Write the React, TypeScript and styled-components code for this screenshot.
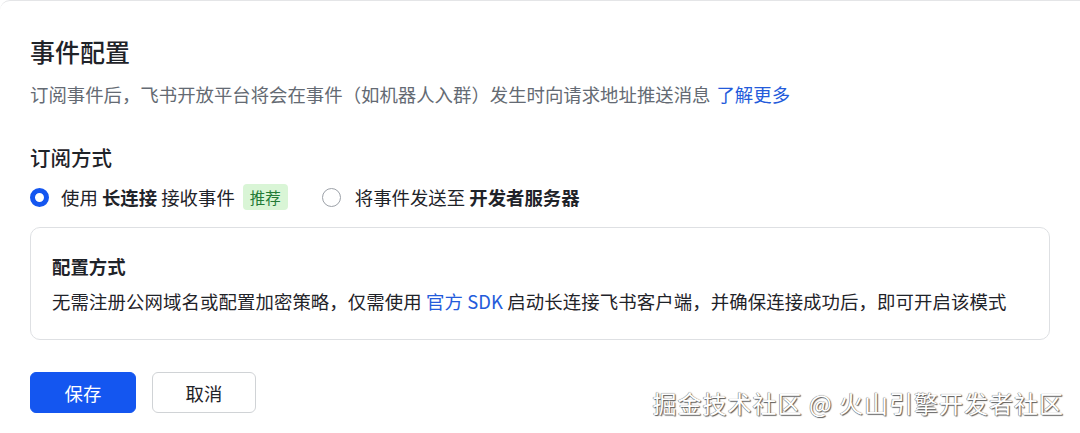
import React from "react";
import styled, { createGlobalStyle } from "styled-components";

const GlobalStyle = createGlobalStyle`
  html, body {
    margin: 0;
    padding: 0;
    background: #ffffff;
  }
  body {
    font-family: "Noto Sans CJK SC", "Noto Sans", sans-serif;
    -webkit-font-smoothing: antialiased;
  }
`;

const Page = styled.div`
  position: relative;
  width: 1080px;
  height: 433px;
  box-sizing: border-box;
  border-top: 1px solid #e4e5e7;
  border-top-left-radius: 10px;
  padding: 0 30px;
  background: #fff;
  overflow: hidden;
`;

const Title = styled.h1`
  margin: 32px 0 0;
  font-size: 25px;
  line-height: 36px;
  font-weight: 500;
  color: #1f2329;
`;

const Description = styled.p`
  margin: 12px 0 0;
  font-size: 18.4px;
  line-height: 26px;
  color: #646a73;
`;

const Link = styled.a`
  color: #245bdb;
  text-decoration: none;
  margin-left: 6px;
`;

const SectionTitle = styled.h2`
  margin: 36px 0 0;
  font-size: 20.5px;
  line-height: 28px;
  font-weight: 500;
  color: #1f2329;
`;

const RadioGroup = styled.div`
  margin-top: 12px;
  display: flex;
  align-items: center;
  gap: 34px;
  height: 28px;
`;

const RadioOption = styled.label`
  display: flex;
  align-items: center;
  font-size: 18.4px;
  line-height: 26px;
  color: #1f2329;
  white-space: pre;
`;

const RadioCircle = styled.span<{ $checked?: boolean }>`
  box-sizing: border-box;
  width: 19px;
  height: 19px;
  border-radius: 50%;
  margin-right: ${(p) => (p.$checked ? "12px" : "14px")};
  border: ${(p) => (p.$checked ? "5.5px solid #1456f0" : "1.2px solid #9ca1a8")};
  background: #fff;
  flex: none;
`;

const Strong = styled.b`
  font-weight: 600;
`;

const Tag = styled.span`
  margin-left: 8px;
  display: inline-flex;
  align-items: center;
  height: 26px;
  padding: 0 7px;
  border-radius: 4px;
  background: #d9f5d6;
  color: #237b36;
  font-size: 15.5px;
`;

const Card = styled.div`
  margin-top: 16px;
  box-sizing: border-box;
  height: 113px;
  border: 1px solid #dee0e3;
  border-radius: 10px;
  padding: 25px 21px 24px;
`;

const CardTitle = styled.div`
  font-size: 18.4px;
  line-height: 26px;
  font-weight: 600;
  color: #1f2329;
`;

const CardText = styled.div`
  margin-top: 9px;
  font-size: 18.4px;
  line-height: 26px;
  letter-spacing: 0.1px;
  color: #1f2329;
`;

const InlineLink = styled.a`
  color: #245bdb;
  text-decoration: none;
`;

const Actions = styled.div`
  margin-top: 32px;
  display: flex;
  gap: 16px;
`;

const Button = styled.button<{ $primary?: boolean; $width: number }>`
  box-sizing: border-box;
  width: ${(p) => p.$width}px;
  height: 41px;
  border-radius: 6px;
  font-family: inherit;
  font-size: 18.4px;
  cursor: pointer;
  border: 1px solid ${(p) => (p.$primary ? "#1456f0" : "#d0d3d6")};
  background: ${(p) => (p.$primary ? "#1456f0" : "#ffffff")};
  color: ${(p) => (p.$primary ? "#ffffff" : "#1f2329")};
`;

const Watermark = styled.div`
  position: absolute;
  right: 16px;
  bottom: 14px;
  font-size: 24px;
  letter-spacing: 1px;
  line-height: 32px;
  color: #ffffff;
  text-shadow: 1px 1px 1px #5a5a5a, -0.5px -0.5px 0.5px #8a8a8a, 0 0 1px #777;
  white-space: pre;
`;

export default function App() {
  return (
    <>
      <GlobalStyle />
      <Page>
        <Title>事件配置</Title>
        <Description>
          订阅事件后，飞书开放平台将会在事件（如机器人入群）发生时向请求地址推送消息
          <Link href="#">了解更多</Link>
        </Description>
        <SectionTitle>订阅方式</SectionTitle>
        <RadioGroup>
          <RadioOption>
            <RadioCircle $checked />
            使用 <Strong>长连接</Strong> 接收事件
            <Tag>推荐</Tag>
          </RadioOption>
          <RadioOption>
            <RadioCircle />
            将事件发送至 <Strong>开发者服务器</Strong>
          </RadioOption>
        </RadioGroup>
        <Card>
          <CardTitle>配置方式</CardTitle>
          <CardText>
            无需注册公网域名或配置加密策略，仅需使用 <InlineLink href="#">官方 SDK</InlineLink> 启动长连接飞书客户端，并确保连接成功后，即可开启该模式
          </CardText>
        </Card>
        <Actions>
          <Button $primary $width={106}>保存</Button>
          <Button $width={104}>取消</Button>
        </Actions>
        <Watermark>掘金技术社区 @ 火山引擎开发者社区</Watermark>
      </Page>
    </>
  );
}
